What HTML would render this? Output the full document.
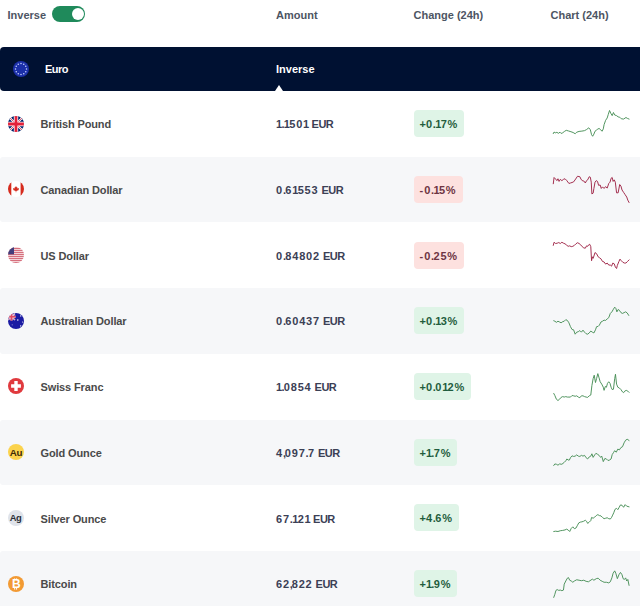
<!DOCTYPE html>
<html><head><meta charset="utf-8">
<style>
*{margin:0;padding:0;box-sizing:border-box}
html,body{width:640px;height:606px;overflow:hidden;background:#fff}
body{position:relative;font-family:"Liberation Sans",sans-serif;font-weight:bold;-webkit-font-smoothing:antialiased}
.a{position:absolute;white-space:nowrap;line-height:1}
.hd{font-size:11px;color:#4d5563}
.tog{position:absolute;left:52px;top:6.2px;width:33.3px;height:16.2px;border-radius:8px;background:#1f8a5b}
.tog i{position:absolute;right:1.6px;top:2.1px;width:12px;height:12px;border-radius:50%;background:#fff}
.bar{position:absolute;left:0;top:47px;width:660px;height:44px;background:#001132;border-radius:4px 0 0 4px}
.bar .t{color:#fff;font-size:11px}
.tri{position:absolute;left:274.5px;top:85px;width:0;height:0;border-left:4.5px solid transparent;border-right:4.5px solid transparent;border-bottom:6px solid #fff}
.row{position:absolute;left:0;width:640px}
.gray{background:#f6f7f9;border-radius:3px 0 0 3px;width:660px}
.fl{position:absolute;left:7.7px;width:16px;height:16px}
.fl svg{display:block}
.nm{font-size:11px;color:#4a4a4a;letter-spacing:-0.12px}
.am{font-size:11px;color:#3b4055}
.bd{position:absolute;left:413.5px;height:27px;border-radius:4px;font-size:11px;line-height:28.5px;padding:0 6px;}
.bd.g{background:#dff4e7;color:#1f5d3d}
.bd.r{background:#fde1df;color:#6e3442}
.one{display:inline-block;width:4.3px;transform:scaleX(.68);transform-origin:0 0}
.ch{position:absolute;left:540px;width:100px;height:50px}
</style></head><body>

<div class="a hd" style="left:7.5px;top:9.6px">Inverse</div>
<div class="tog"><i></i></div>
<div class="a hd" style="left:276px;top:9.6px">Amount</div>
<div class="a hd" style="left:413.5px;top:9.6px">Change (24h)</div>
<div class="a hd" style="left:550.5px;top:9.6px">Chart (24h)</div>
<div class="bar"></div>
<div class="fl" style="left:12.6px;top:60.9px"><svg width="16" height="16" viewBox="0 0 16 16"><defs><clipPath id="c_eu"><circle cx="8" cy="8" r="8"/></clipPath></defs><g clip-path="url(#c_eu)"><rect width="16" height="16" fill="#1b2fa8"/><circle cx="13.50" cy="8.00" r="0.75" fill="#c9d6ff"/><circle cx="12.76" cy="10.75" r="0.75" fill="#c9d6ff"/><circle cx="10.75" cy="12.76" r="0.75" fill="#c9d6ff"/><circle cx="8.00" cy="13.50" r="0.75" fill="#c9d6ff"/><circle cx="5.25" cy="12.76" r="0.75" fill="#c9d6ff"/><circle cx="3.24" cy="10.75" r="0.75" fill="#c9d6ff"/><circle cx="2.50" cy="8.00" r="0.75" fill="#c9d6ff"/><circle cx="3.24" cy="5.25" r="0.75" fill="#c9d6ff"/><circle cx="5.25" cy="3.24" r="0.75" fill="#c9d6ff"/><circle cx="8.00" cy="2.50" r="0.75" fill="#c9d6ff"/><circle cx="10.75" cy="3.24" r="0.75" fill="#c9d6ff"/><circle cx="12.76" cy="5.25" r="0.75" fill="#c9d6ff"/></g></svg></div>
<div class="a t" style="left:45px;top:63.5px;color:#fff;font-size:11px;letter-spacing:-0.5px">Euro</div>
<div class="a t" style="left:276px;top:63.5px;color:#fff;font-size:11px">Inverse</div>
<div class="tri"></div>
<div class="row" style="top:91.00px;height:65.7px"></div>
<div class="fl" style="top:115.65px"><svg width="16" height="16" viewBox="0 0 16 16"><defs><clipPath id="c_uk"><circle cx="8" cy="8" r="8"/></clipPath></defs><g clip-path="url(#c_uk)"><rect width="16" height="16" fill="#012169"/><path d="M0,0 L16,16 M16,0 L0,16" stroke="#fff" stroke-width="2"/><path d="M0,0 L16,16 M16,0 L0,16" stroke="#c8102e" stroke-width="0.7"/><path d="M8,0 V16 M0,8 H16" stroke="#fff" stroke-width="4.4"/><path d="M8,0 V16 M0,8 H16" stroke="#e4213a" stroke-width="2.8"/></g></svg></div>
<div class="a nm" style="left:40.5px;top:119.35px">British Pound</div>
<div class="a am" style="left:276px;top:119.35px"><span style="letter-spacing:-0.70px">1</span><span style="letter-spacing:-0.70px">.</span><span style="letter-spacing:-0.70px">1</span><span style="letter-spacing:0.80px">5</span><span style="letter-spacing:0.80px">0</span><span style="letter-spacing:-0.70px">1</span> <span style="letter-spacing:-0.50px">E</span><span style="letter-spacing:-0.50px">U</span>R</div>
<div class="bd g" style="top:110.25px">+<span style="letter-spacing:0.80px">0</span><span style="letter-spacing:-0.70px">.</span><span style="letter-spacing:-0.70px">1</span><span style="letter-spacing:0.80px">7</span><span style="letter-spacing:1.00px">%</span></div>
<div class="row gray" style="top:156.70px;height:65.7px"></div>
<div class="fl" style="top:181.35px"><svg width="16" height="16" viewBox="0 0 16 16"><defs><clipPath id="c_ca"><circle cx="8" cy="8" r="8"/></clipPath></defs><g clip-path="url(#c_ca)"><rect width="16" height="16" fill="#fff"/><rect x="0" y="0" width="3.3" height="16" fill="#d52b1e"/><rect x="12.6" y="0" width="3.4" height="16" fill="#d52b1e"/><path d="M8,4.9 L8.7,6.3 L9.4,6.0 L9.1,7.6 L10.3,6.9 L10.6,7.5 L11.1,7.5 L10.5,8.7 L10.9,9.0 L8.3,9.9 L8.3,11.2 L7.7,11.2 L7.7,9.9 L5.1,9.0 L5.5,8.7 L4.9,7.5 L5.4,7.5 L5.7,6.9 L6.9,7.6 L6.6,6.0 L7.3,6.3 Z" fill="#d52b1e"/></g></svg></div>
<div class="a nm" style="left:40.5px;top:185.05px">Canadian Dollar</div>
<div class="a am" style="left:276px;top:185.05px"><span style="letter-spacing:0.80px">0</span><span style="letter-spacing:-0.70px">.</span><span style="letter-spacing:0.80px">6</span><span style="letter-spacing:-0.70px">1</span><span style="letter-spacing:0.80px">5</span><span style="letter-spacing:0.80px">5</span><span style="letter-spacing:0.80px">3</span> <span style="letter-spacing:-0.50px">E</span><span style="letter-spacing:-0.50px">U</span>R</div>
<div class="bd r" style="top:175.95px"><span style="letter-spacing:1.00px">-</span><span style="letter-spacing:0.80px">0</span><span style="letter-spacing:-0.70px">.</span><span style="letter-spacing:-0.70px">1</span><span style="letter-spacing:0.80px">5</span><span style="letter-spacing:1.00px">%</span></div>
<div class="row" style="top:222.40px;height:65.7px"></div>
<div class="fl" style="top:247.05px"><svg width="16" height="16" viewBox="0 0 16 16"><defs><clipPath id="c_us"><circle cx="8" cy="8" r="8"/></clipPath></defs><g clip-path="url(#c_us)"><rect width="16" height="16" fill="#fff"/><rect x="0" y="0.75" width="16" height="1.05" fill="#cd4d5e"/><rect x="0" y="2.75" width="16" height="1.05" fill="#cd4d5e"/><rect x="0" y="4.75" width="16" height="1.05" fill="#cd4d5e"/><rect x="0" y="6.75" width="16" height="1.05" fill="#cd4d5e"/><rect x="0" y="8.75" width="16" height="1.05" fill="#cd4d5e"/><rect x="0" y="10.75" width="16" height="1.05" fill="#cd4d5e"/><rect x="0" y="12.75" width="16" height="1.05" fill="#cd4d5e"/><rect x="0" y="14.75" width="16" height="1.05" fill="#cd4d5e"/><rect x="0" y="0" width="6.0" height="7.3" fill="#433f7c"/></g></svg></div>
<div class="a nm" style="left:40.5px;top:250.75px">US Dollar</div>
<div class="a am" style="left:276px;top:250.75px"><span style="letter-spacing:0.80px">0</span><span style="letter-spacing:-0.70px">.</span><span style="letter-spacing:0.80px">8</span><span style="letter-spacing:0.80px">4</span><span style="letter-spacing:0.80px">8</span><span style="letter-spacing:0.80px">0</span><span style="letter-spacing:0.80px">2</span> <span style="letter-spacing:-0.50px">E</span><span style="letter-spacing:-0.50px">U</span>R</div>
<div class="bd r" style="top:241.65px"><span style="letter-spacing:1.00px">-</span><span style="letter-spacing:0.80px">0</span><span style="letter-spacing:-0.70px">.</span><span style="letter-spacing:0.80px">2</span><span style="letter-spacing:0.80px">5</span><span style="letter-spacing:1.00px">%</span></div>
<div class="row gray" style="top:288.10px;height:65.7px"></div>
<div class="fl" style="top:312.75px"><svg width="16" height="16" viewBox="0 0 16 16"><defs><clipPath id="c_au"><circle cx="8" cy="8" r="8"/></clipPath></defs><g clip-path="url(#c_au)"><rect width="16" height="16" fill="#1b1ba3"/><path d="M0,0.5 L7,7 M7,0.5 L0,7" stroke="#fff" stroke-width="1.3"/><path d="M0,0.5 L7,7 M7,0.5 L0,7" stroke="#e45a70" stroke-width="0.6"/><path d="M3.5,0 V7.5 M0,3.8 H7.5" stroke="#f4c0cc" stroke-width="2.4"/><path d="M3.5,0 V7.5 M0,3.8 H7.5" stroke="#e24a62" stroke-width="1.5"/><circle cx="9.8" cy="7" r="0.75" fill="#fff"/><circle cx="12.7" cy="2.9" r="0.7" fill="#fff"/><circle cx="14.6" cy="9" r="0.55" fill="#fff"/><circle cx="12.7" cy="12.9" r="0.7" fill="#fff"/><circle cx="4.2" cy="11.8" r="0.6" fill="#8f8fd8"/></g></svg></div>
<div class="a nm" style="left:40.5px;top:316.45px">Australian Dollar</div>
<div class="a am" style="left:276px;top:316.45px"><span style="letter-spacing:0.80px">0</span><span style="letter-spacing:-0.70px">.</span><span style="letter-spacing:0.80px">6</span><span style="letter-spacing:0.80px">0</span><span style="letter-spacing:0.80px">4</span><span style="letter-spacing:0.80px">3</span><span style="letter-spacing:0.80px">7</span> <span style="letter-spacing:-0.50px">E</span><span style="letter-spacing:-0.50px">U</span>R</div>
<div class="bd g" style="top:307.35px">+<span style="letter-spacing:0.80px">0</span><span style="letter-spacing:-0.70px">.</span><span style="letter-spacing:-0.70px">1</span><span style="letter-spacing:0.80px">3</span><span style="letter-spacing:1.00px">%</span></div>
<div class="row" style="top:353.80px;height:65.7px"></div>
<div class="fl" style="top:378.45px"><svg width="16" height="16" viewBox="0 0 16 16"><defs><clipPath id="c_ch"><circle cx="8" cy="8" r="8"/></clipPath></defs><g clip-path="url(#c_ch)"><rect width="16" height="16" fill="#e03a3e"/><path d="M6.3,3.1 H9.7 V6.3 H12.9 V9.7 H9.7 V12.9 H6.3 V9.7 H3.1 V6.3 H6.3 Z" fill="#fff"/></g></svg></div>
<div class="a nm" style="left:40.5px;top:382.15px">Swiss Franc</div>
<div class="a am" style="left:276px;top:382.15px"><span style="letter-spacing:-0.70px">1</span><span style="letter-spacing:-0.70px">.</span><span style="letter-spacing:0.80px">0</span><span style="letter-spacing:0.80px">8</span><span style="letter-spacing:0.80px">5</span><span style="letter-spacing:0.80px">4</span> <span style="letter-spacing:-0.50px">E</span><span style="letter-spacing:-0.50px">U</span>R</div>
<div class="bd g" style="top:373.05px">+<span style="letter-spacing:0.80px">0</span><span style="letter-spacing:-0.70px">.</span><span style="letter-spacing:0.80px">0</span><span style="letter-spacing:-0.70px">1</span><span style="letter-spacing:0.80px">2</span><span style="letter-spacing:1.00px">%</span></div>
<div class="row gray" style="top:419.50px;height:65.7px"></div>
<div class="fl" style="top:444.15px"><svg width="16" height="16" viewBox="0 0 16 16"><defs><clipPath id="c_xau"><circle cx="8" cy="8" r="8"/></clipPath></defs><g clip-path="url(#c_xau)"><rect width="16" height="16" fill="#fbd34d"/><text x="8" y="11.5" text-anchor="middle" font-family="Liberation Sans" font-weight="bold" font-size="9.8" letter-spacing="-0.35" fill="#3b2a07">Au</text></g></svg></div>
<div class="a nm" style="left:40.5px;top:447.85px">Gold Ounce</div>
<div class="a am" style="left:276px;top:447.85px"><span style="letter-spacing:0.80px">4</span><span style="letter-spacing:-1.20px">,</span><span style="letter-spacing:0.80px">0</span><span style="letter-spacing:0.80px">9</span><span style="letter-spacing:0.80px">7</span><span style="letter-spacing:-0.70px">.</span><span style="letter-spacing:0.80px">7</span> <span style="letter-spacing:-0.50px">E</span><span style="letter-spacing:-0.50px">U</span>R</div>
<div class="bd g" style="top:438.75px">+<span style="letter-spacing:-0.70px">1</span><span style="letter-spacing:-0.70px">.</span><span style="letter-spacing:0.80px">7</span><span style="letter-spacing:1.00px">%</span></div>
<div class="row" style="top:485.20px;height:65.7px"></div>
<div class="fl" style="top:509.85px"><svg width="16" height="16" viewBox="0 0 16 16"><defs><clipPath id="c_xag"><circle cx="8" cy="8" r="8"/></clipPath></defs><g clip-path="url(#c_xag)"><rect width="16" height="16" fill="#dfe3ea"/><text x="7.6" y="10.8" text-anchor="middle" font-family="Liberation Sans" font-weight="bold" font-size="9.4" letter-spacing="-0.3" fill="#2a2f38">Ag</text></g></svg></div>
<div class="a nm" style="left:40.5px;top:513.55px">Silver Ounce</div>
<div class="a am" style="left:276px;top:513.55px"><span style="letter-spacing:0.80px">6</span><span style="letter-spacing:0.80px">7</span><span style="letter-spacing:-0.70px">.</span><span style="letter-spacing:-0.70px">1</span><span style="letter-spacing:0.80px">2</span><span style="letter-spacing:-0.70px">1</span> <span style="letter-spacing:-0.50px">E</span><span style="letter-spacing:-0.50px">U</span>R</div>
<div class="bd g" style="top:504.45px">+<span style="letter-spacing:0.80px">4</span><span style="letter-spacing:-0.70px">.</span><span style="letter-spacing:0.80px">6</span><span style="letter-spacing:1.00px">%</span></div>
<div class="row gray" style="top:550.90px;height:65.7px"></div>
<div class="fl" style="top:575.55px"><svg width="16" height="16" viewBox="0 0 16 16"><defs><clipPath id="c_btc"><circle cx="8" cy="8" r="8"/></clipPath></defs><g clip-path="url(#c_btc)"><rect width="16" height="16" fill="#f29a34"/><text x="8.3" y="12.3" text-anchor="middle" font-family="Liberation Sans" font-weight="bold" font-size="12" fill="#fff">B</text><path d="M6.7,2.4 V4.2 M8.6,2.4 V4.2 M6.7,11.9 V13.6 M8.6,11.9 V13.6" stroke="#fff" stroke-width="1"/></g></svg></div>
<div class="a nm" style="left:40.5px;top:579.25px">Bitcoin</div>
<div class="a am" style="left:276px;top:579.25px"><span style="letter-spacing:0.80px">6</span><span style="letter-spacing:0.80px">2</span><span style="letter-spacing:-1.20px">,</span><span style="letter-spacing:0.80px">8</span><span style="letter-spacing:0.80px">2</span><span style="letter-spacing:0.80px">2</span> <span style="letter-spacing:-0.50px">E</span><span style="letter-spacing:-0.50px">U</span>R</div>
<div class="bd g" style="top:570.15px">+<span style="letter-spacing:-0.70px">1</span><span style="letter-spacing:-0.70px">.</span><span style="letter-spacing:0.80px">9</span><span style="letter-spacing:1.00px">%</span></div>
<svg class="ch" style="top:100px" viewBox="0 0 640 320"><polyline points="85,215 90,205 98,210 108,207 118,213 128,206 135,214 145,210 158,200 168,194 182,198 198,203 212,208 225,216 235,206 250,201 268,199 285,196 298,189 312,178 322,190 330,222 337,232 345,218 352,200 362,192 370,186 378,182 388,190 397,200 405,185 410,158 420,130 430,115 437,92 445,67 453,85 462,100 470,80 478,96 490,100 500,108 510,110 520,120 535,122 550,112 560,118 570,122" fill="none" stroke="#468e55" stroke-width="6" stroke-linejoin="round" stroke-linecap="round"/></svg>
<svg class="ch" style="top:165px" viewBox="0 0 640 320"><polyline points="85,120 90,80 100,90 108,100 115,88 122,105 130,92 140,100 150,92 160,88 170,98 185,118 195,115 205,112 215,108 228,90 240,72 255,75 262,90 270,100 280,102 290,115 298,100 305,95 315,75 322,78 328,110 332,185 340,180 345,150 352,110 360,100 368,105 375,130 385,128 392,150 400,140 410,150 420,138 430,148 440,118 448,110 455,85 462,80 468,105 475,95 482,110 490,178 500,178 510,125 518,135 525,160 535,175 545,190 555,205 562,225 570,240" fill="none" stroke="#9e2345" stroke-width="6" stroke-linejoin="round" stroke-linecap="round"/></svg>
<svg class="ch" style="top:231px" viewBox="0 0 640 320"><polyline points="85,92 90,72 100,80 110,78 120,74 130,80 140,72 150,78 160,82 170,90 180,98 190,95 200,100 210,98 220,92 230,82 240,75 250,80 260,88 270,100 280,108 290,110 298,95 305,98 312,88 318,85 325,100 330,190 335,165 340,175 345,160 352,138 362,145 372,165 382,172 390,178 400,195 410,198 420,212 430,205 440,218 450,218 458,225 466,205 475,210 482,230 490,240 495,220 505,195 512,180 520,190 530,200 540,205 550,205 560,195 570,185" fill="none" stroke="#9e2345" stroke-width="6" stroke-linejoin="round" stroke-linecap="round"/></svg>
<svg class="ch" style="top:297px" viewBox="0 0 640 320"><polyline points="88,152 95,155 105,162 115,155 125,160 135,165 145,158 155,155 165,145 175,150 185,165 195,190 205,208 215,210 225,238 235,225 245,222 255,215 265,225 275,212 285,225 295,235 305,238 315,230 325,218 335,225 345,230 355,210 362,190 372,188 380,180 390,160 400,155 410,148 420,150 430,140 440,132 450,105 460,95 470,78 478,65 485,72 492,95 500,80 508,85 518,100 528,105 538,100 548,95 558,102 568,118" fill="none" stroke="#468e55" stroke-width="6" stroke-linejoin="round" stroke-linecap="round"/></svg>
<svg class="ch" style="top:363px" viewBox="0 0 640 320"><polyline points="88,195 95,208 105,232 115,240 125,232 135,220 145,215 155,218 165,215 175,218 185,218 195,218 205,208 215,210 225,213 235,210 245,218 255,222 265,210 275,210 285,215 295,218 305,220 315,210 325,205 332,145 340,100 347,78 355,125 362,100 370,68 378,95 385,120 395,135 405,155 410,175 418,150 425,155 432,130 440,120 448,130 455,155 462,170 470,168 478,100 483,72 490,135 498,155 508,160 518,170 528,185 535,190 542,180 552,175 562,180 570,188" fill="none" stroke="#468e55" stroke-width="6" stroke-linejoin="round" stroke-linecap="round"/></svg>
<svg class="ch" style="top:428px" viewBox="0 0 640 320"><polyline points="88,240 95,230 105,232 115,238 125,230 140,232 155,220 165,210 172,198 180,205 188,205 195,190 205,178 215,182 225,180 235,172 245,180 255,182 265,175 275,180 285,175 295,190 305,198 315,185 325,180 332,165 340,188 350,172 358,162 368,168 378,175 388,188 395,180 405,215 415,195 425,198 435,208 445,205 455,198 462,170 470,158 478,145 488,155 498,135 508,140 518,125 528,120 538,95 548,78 558,72 570,80" fill="none" stroke="#468e55" stroke-width="6" stroke-linejoin="round" stroke-linecap="round"/></svg>
<svg class="ch" style="top:494px" viewBox="0 0 640 320"><polyline points="88,240 100,238 115,240 130,235 145,233 160,230 170,225 180,230 190,240 200,220 210,210 220,222 230,218 240,200 248,185 258,180 268,178 278,175 290,168 298,175 305,188 315,180 325,170 330,150 340,155 350,148 360,138 370,132 380,138 390,140 400,150 410,158 420,155 430,152 440,158 450,160 458,150 465,135 472,120 480,98 490,92 498,100 505,88 515,70 525,72 535,85 545,68 555,78 570,82" fill="none" stroke="#468e55" stroke-width="6" stroke-linejoin="round" stroke-linecap="round"/></svg>
<svg class="ch" style="top:556px" viewBox="0 0 640 320"><polyline points="88,265 95,245 102,220 110,215 120,220 130,218 140,222 150,218 155,180 165,160 175,142 182,138 190,155 200,160 210,168 220,160 235,152 250,155 265,158 280,155 295,162 310,165 320,158 335,148 345,155 360,145 372,142 385,155 398,162 410,168 425,168 440,172 450,165 460,140 468,110 478,95 485,110 495,145 505,120 515,105 525,120 532,145 540,150 548,140 555,160 562,150 570,188" fill="none" stroke="#468e55" stroke-width="6" stroke-linejoin="round" stroke-linecap="round"/></svg>
</body></html>
